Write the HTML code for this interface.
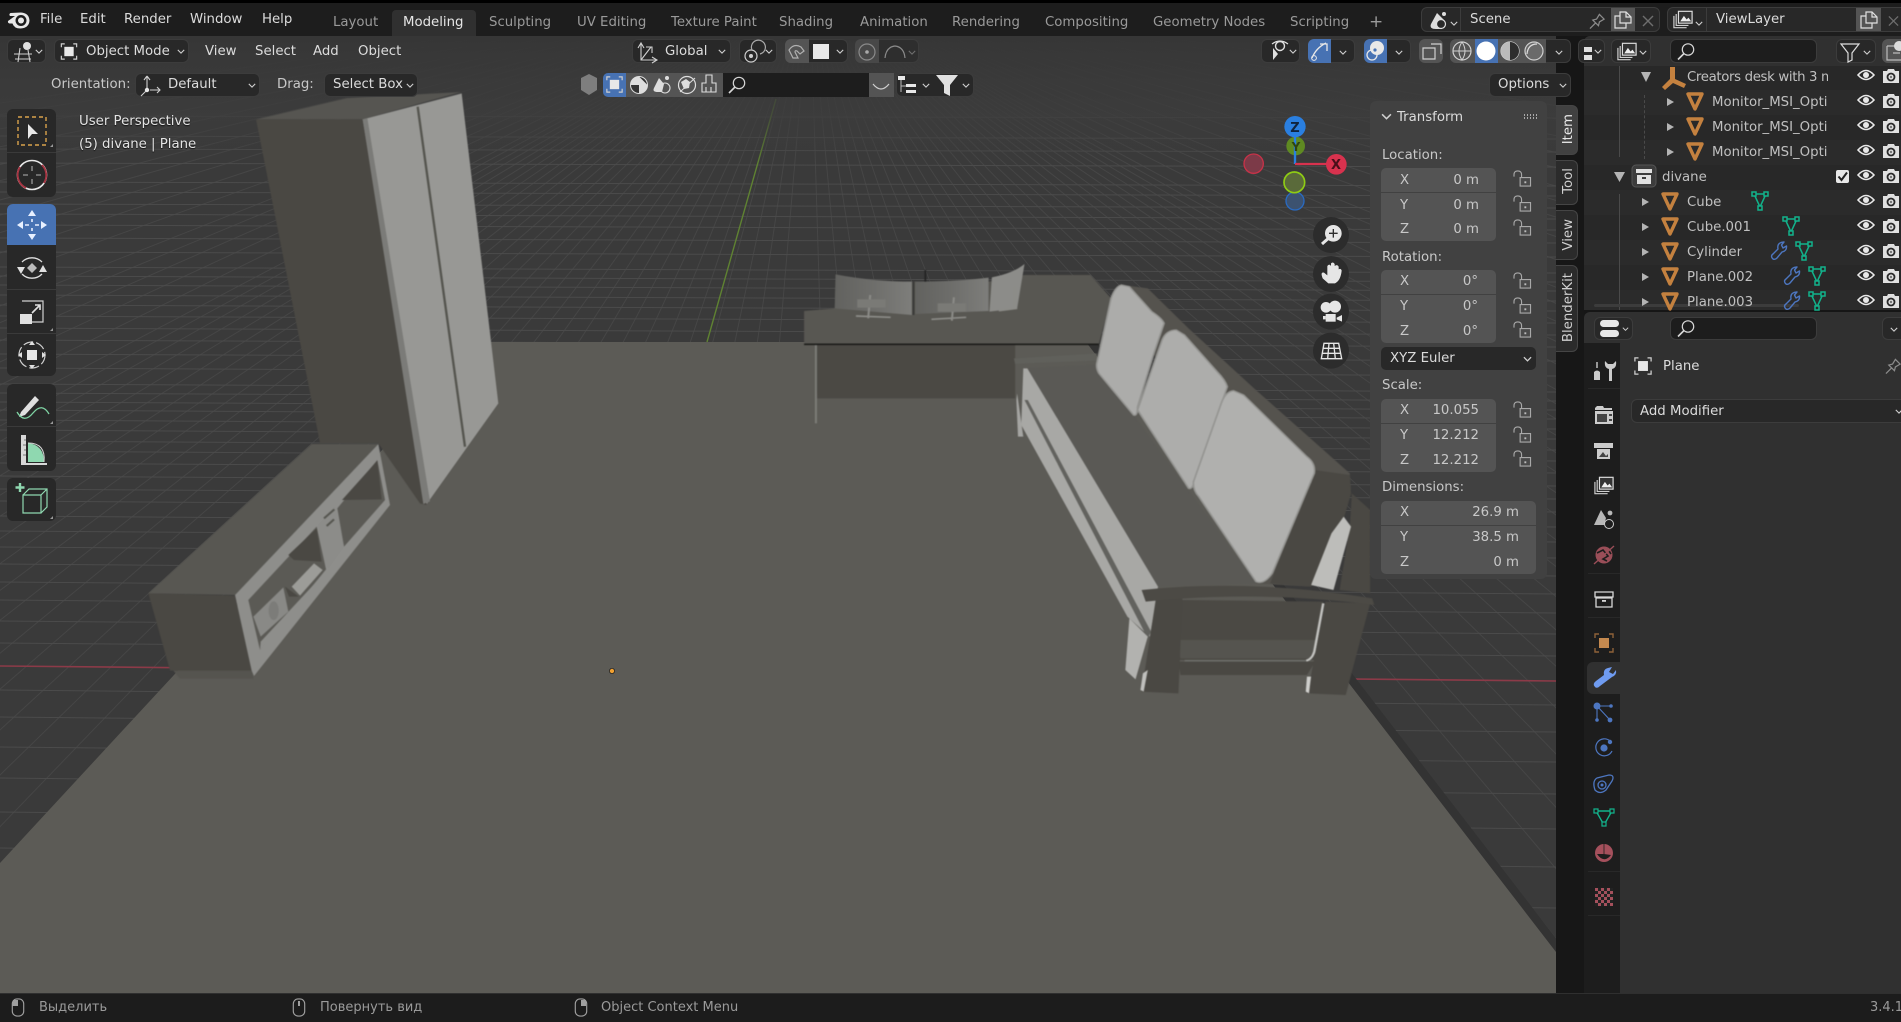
<!DOCTYPE html>
<html lang="en"><head><meta charset="utf-8"><title>Blender 3.4.1</title>
<style>
html,body{margin:0;padding:0;background:#000;}
#r{position:relative;width:1901px;height:1022px;overflow:hidden;background:#161616;font:13.3px/16px "DejaVu Sans","Liberation Sans",sans-serif;color:#c8c8c8;}
#r>svg{position:absolute;left:0;top:0;}
.b{position:absolute;box-sizing:border-box;}
.t{position:absolute;white-space:nowrap;height:16px;line-height:16px;transform:translateY(1.2px);}
.dk{background:#282828;border:1px solid #3c3c3c;border-radius:6px;}
.g{background:#545454;}
.bl{background:#4772b3;}
.mt{color:#dcdcdc;}
.tb{color:#9a9a9a;}
.vw{color:#e4e4e4;text-shadow:0 1px 1px #111;}
.f{position:absolute;background:#545454;height:24px;}
.ll{color:#c8c8c8;}
.vt{position:absolute;writing-mode:vertical-rl;transform:rotate(180deg);white-space:nowrap;line-height:16px;color:#cfcfcf;}
.tab{position:absolute;left:1556px;width:22px;background:#2b2b2b;border:1px solid #454545;border-left:0;border-radius:0 6px 6px 0;box-sizing:border-box;}
.ot{position:absolute;white-space:nowrap;overflow:hidden;height:16px;line-height:16px;color:#c0c0c0;transform:translateY(1px);}
.st{color:#9a9a9a;font-size:13px;}
</style></head><body><div id="r">

<svg width="1901" height="1022" viewBox="0 0 1901 1022">
<defs>
<linearGradient id="tp" x1="0" y1="0" x2="0" y2="1"><stop offset="0" stop-color="#363636"/><stop offset=".6" stop-color="#3c3c3c" stop-opacity=".75"/><stop offset="1" stop-color="#3c3c3c" stop-opacity="0"/></linearGradient>
<linearGradient id="mon" x1="0" y1="0" x2="1" y2="0"><stop offset="0" stop-color="#62625f"/><stop offset=".5" stop-color="#6e6e6b"/><stop offset="1" stop-color="#7e7e7b"/></linearGradient>
<clipPath id="vp"><rect x="0" y="36" width="1556" height="957"/></clipPath>
</defs>
<rect x="0" y="36" width="1556" height="957" fill="#3a3a3a"/>
<g clip-path="url(#vp)">
<path stroke="#464646" stroke-width="1" fill="none" d="M810-14L723 1000M810-14L660 1000M810-14L596 1000M810-14L533 1000M810-14L469 1000M810-14L405 1000M810-14L342 1000M810-14L278 1000M810-14L215 1000M810-14L151 1000M810-14L87 1000M810-14L24 1000M810-14L-40 1000M810-14L-103 1000M810-14L-167 1000M810-14L-231 1000M810-14L-294 1000M810-14L-358 1000M810-14L-421 1000M810-14L-485 1000M810-14L-549 1000M810-14L-612 1000M810-14L-676 1000M810-14L-739 1000M810-14L-803 1000M810-14L-867 1000M810-14L-930 1000M810-14L-994 1000M810-14L-1057 1000M810-14L-1121 1000M810-14L-1248 1000M810-14L-1375 1000M810-14L-1503 1000M810-14L-1630 1000M810-14L-1757 1000M810-14L-2011 1000M810-14L-2266 1000M810-14L-2520 1000M810-14L-2775 1000M810-14L-3029 1000M810-14L-3411 1000M810-14L-3792 1000M810-14L-4301 1000M810-14L-4937 1000M810-14L-5573 1000M810-14L-6209 1000
M810-14L841 1000M810-14L904 1000M810-14L968 1000M810-14L1031 1000M810-14L1095 1000M810-14L1159 1000M810-14L1222 1000M810-14L1286 1000M810-14L1349 1000M810-14L1413 1000M810-14L1477 1000M810-14L1540 1000M810-14L1604 1000M810-14L1667 1000M810-14L1731 1000M810-14L1795 1000M810-14L1858 1000M810-14L1922 1000M810-14L1985 1000M810-14L2049 1000M810-14L2113 1000M810-14L2176 1000M810-14L2240 1000M810-14L2303 1000M810-14L2367 1000M810-14L2431 1000M810-14L2494 1000M810-14L2558 1000M810-14L2621 1000M810-14L2685 1000M810-14L2812 1000M810-14L2939 1000M810-14L3067 1000M810-14L3194 1000M810-14L3321 1000M810-14L3575 1000M810-14L3830 1000M810-14L4084 1000M810-14L4339 1000M810-14L4593 1000M810-14L4975 1000M810-14L5356 1000M810-14L5865 1000M810-14L6501 1000M810-14L7137 1000M810-14L7773 1000"/>
<path stroke="#4b4b4b" stroke-width="1" fill="none" d="M0 984L1556 1004M0 934L1556 954M0 889L1556 908M0 848L1556 867M0 812L1556 829M0 778L1556 794M0 747L1556 762M0 717L1556 732M0 690L1556 705M0 643L1556 656M0 621L1556 634M0 600L1556 613M0 582L1556 594M0 564L1556 576M0 547L1556 558M0 531L1556 542M0 516L1556 527M0 501L1556 512M0 489L1556 499M0 476L1556 486M0 463L1556 473M0 451L1556 461M0 441L1556 450M0 430L1556 439M0 420L1556 429M0 410L1556 419M0 402L1556 410M0 393L1556 401M0 384L1556 392M0 368L1556 376M0 354L1556 361M0 340L1556 347M0 328L1556 335M0 316L1556 323M0 305L1556 311M0 295L1556 301M0 285L1556 291M0 276L1556 282M0 267L1556 273M0 252L1556 257M0 238L1556 243M0 225L1556 230M0 214L1556 219M0 204L1556 208M0 192L1556 196M0 182L1556 186M0 163L1556 167M0 149L1556 152M0 136L1556 139M0 116L1556 118"/>
<path d="M0 666L1556 681" stroke="#8c3a48" stroke-width="1.6"/>
<path d="M707 342L776 99" stroke="#5f8232" stroke-width="1.4"/>
<rect x="0" y="36" width="1556" height="130" fill="url(#tp)"/>
<path d="M1086 342L1562 960" stroke="#333" stroke-width="9" transform="translate(5 0)"/>
<!-- floor -->
<polygon points="482,342 1086,342 1556,952 1556,993 0,993 0,863" fill="#5c5b56"/>
<g style="filter:blur(.5px)">
<!-- wardrobe -->
<g transform="translate(0 100) scale(.33333)">
<polygon points="768,58 1041,-6 1383,-24 1088,58" fill="#565551"/>
<polygon points="768,58 1088,58 1280,1215 1260,1210 1135,1030 960,1030" fill="#4a4843"/>
<polygon points="1088,58 1385,-20 1495,910 1280,1212" fill="#989895"/>
<polygon points="1088,58 1102,54 1290,1204 1270,1212" fill="#7b7b78"/>
<path d="M1253 20L1395 1040" stroke="#55554f" stroke-width="7"/>
</g>
<!-- TV stand -->
<g transform="translate(140 430) scale(.33333)">
<polygon points="100,722 335,722 340,746 120,746" fill="#55544f"/>
<polygon points="25,490 285,497 335,722 90,722" fill="#4a4843"/>
<polygon points="25,490 515,42 715,42 285,495" fill="#585752"/>
<polygon points="285,495 715,42 750,225 342,738 335,722" fill="#8e8e8b"/>
<polygon points="592,235 712,90 735,210 612,350" fill="#5b5a55"/>
<polygon points="606,210 712,92 725,208" fill="#4a4843"/>
<polygon points="535,285 585,230 612,350 565,415 555,395" fill="#8c8c89"/>
<path d="M552 265L583 238M560 288L582 268" stroke="#55554f" stroke-width="6"/>
<polygon points="325,510 530,290 558,418 360,660" fill="#5b5a55"/>
<polygon points="445,375 530,295 545,395 462,390" fill="#4a4843"/>
<polygon points="340,560 430,472 445,545 362,620" fill="#898986"/>
<ellipse cx="401" cy="542" rx="15" ry="28" fill="#7c7c79"/>
<polygon points="435,470 476,500 447,500" fill="#4a4843"/>
<polygon points="455,470 522,400 548,420 480,497" fill="#9c9c98"/>
<polygon points="362,635 560,422 565,440 360,660" fill="#8e8e8b"/>
</g>
<!-- desk + monitors + sofa -->
<g transform="translate(760 240) scale(.40816 .33333)">
<polygon points="135,315 625,315 625,475 140,475" fill="#4b4944"/>
<path d="M137 315V550" stroke="#7c7c78" stroke-width="5"/>
<polygon points="108,213 183,205 185,125 560,125 648,105 810,105 860,175 830,312 108,312" fill="#585752"/>
<path d="M108 313H830" stroke="#1d1d1b" stroke-width="5"/>
<path d="M185 103Q280 125 372 125V225L183 205Z" fill="url(#mon)"/>
<path d="M380 125Q480 125 560 113V213L380 222Z" fill="url(#mon)"/>
<path d="M568 112Q620 100 648 72L630 205L562 215Z" fill="#8c8c89"/>
<path d="M376 125V225" stroke="#3a3a38" stroke-width="5"/><path d="M405 90V125" stroke="#222" stroke-width="4"/>
<path d="M270 165L265 235M235 228L320 232M475 172L470 242M420 238L505 232M625 140L625 205M585 212L630 205" stroke="#8c8c88" stroke-width="5" fill="none"/>
<rect x="238" y="178" width="70" height="25" fill="#7a7a76"/><rect x="435" y="190" width="70" height="25" fill="#7a7a76"/>
<!-- sofa -->
<polygon points="622,355 825,340 825,362 690,368 625,372" fill="#60605b"/>
<polygon points="890,135 950,145 1050,265 1215,450 1445,700 1448,760 1400,960 1350,1040 1215,1030" fill="#55534e"/>
<polygon points="1358,690 1445,705 1448,760 1400,960 1350,1040 1250,1030" fill="#4a4843"/>
<polygon points="1450,760 1495,810 1495,1060 1420,1050 1445,860" fill="#4a4843"/>
<polygon points="1350,1035 1400,880 1430,830 1448,860 1405,1050" fill="#bdbdba"/>
<polygon points="655,385 825,375 1215,1030 975,1040" fill="#5a5955"/>
<polygon points="645,385 655,385 975,1040 965,1120 955,1190 900,1130 640,555" fill="#a8a8a5"/>
<polygon points="648,480 656,480 958,1175 950,1195" fill="#62625e"/>
<polygon points="630,460 645,590 632,590 628,480" fill="#a5a5a2"/>
<g stroke="#949491" stroke-width="4">
<path d="M885 135Q870 140 860 175L825 370Q823 385 830 400L915 525Q925 530 925 500L965 340L990 250Q985 235 960 215L905 140Z" fill="#acacaa"/>
<path d="M1020 270Q995 270 985 300L925 510L1050 745Q1060 750 1065 720L1145 440Q1140 420 1120 395L1040 285Z" fill="#adadab"/>
<path d="M1160 452Q1140 455 1130 490L1062 725Q1060 750 1075 770L1215 1025Q1235 1035 1255 1000L1358 700Q1362 670 1340 650L1185 465Z" fill="#b0b0ae"/>
</g>
<polygon points="905,1135 950,1190 920,1318 895,1290" fill="#b2b2af"/>
<polygon points="1030,1080 1380,1085 1360,1260 1025,1260" fill="#4b4944"/>
<polygon points="1022,1200 1370,1200 1345,1255 1030,1255" fill="#55544f"/>
<path d="M1380 1090L1358 1235Q1352 1258 1338 1262" stroke="#c4c4c1" stroke-width="6" fill="none"/>
<path d="M1338 1262H1040" stroke="#6d6d69" stroke-width="5" fill="none"/>
<polygon points="1025,1265 1360,1265 1340,1305 1030,1305" fill="#4a4843"/>
<polygon points="970,1075 1035,1070 1025,1360 935,1355" fill="#4a4843"/>
<polygon points="1385,1085 1495,1090 1435,1365 1340,1360 1350,1305" fill="#4a4843"/>
<polygon points="1340,1310 1350,1310 1345,1360 1337,1355" fill="#cfcfcc"/>
<polygon points="950,1290 940,1355 932,1350 938,1300" fill="#c0c0bd"/>
<path d="M935 1050Q1200 1015 1500 1075L1505 1095Q1220 1050 945 1085Z" fill="#4c4a45"/>
</g>
</g>
<circle cx="612" cy="671" r="2.6" fill="#f0a030" stroke="#222" stroke-width=".8"/>
<!-- gizmo -->
<g transform="translate(1180 90) scale(.33333)">
<circle cx="221" cy="221" r="29" fill="#7c3a48" stroke="#c83248" stroke-width="4"/>
<circle cx="345" cy="333" r="27" fill="#3c5270" stroke="#2a6ac0" stroke-width="4"/>
<circle cx="343" cy="277" r="31" fill="#5a6a3a" stroke="#8fcc14" stroke-width="5"/>
<circle cx="347" cy="168" r="28" fill="#5f8a22"/>
<path d="M345 222V110" stroke="#2a7fe0" stroke-width="7"/><path d="M345 222H469" stroke="#d8324e" stroke-width="7"/>
<circle cx="345" cy="110" r="32" fill="#2a7fe0"/>
<circle cx="469" cy="223" r="31" fill="#d8324e"/>
<circle cx="453" cy="435" r="54" fill="#2c2c2c"/><circle cx="453" cy="552" r="54" fill="#2c2c2c"/><circle cx="453" cy="665" r="54" fill="#2c2c2c"/><circle cx="453" cy="782" r="54" fill="#2c2c2c"/>
<circle cx="460" cy="430" r="25" fill="#e6e6e6"/><path d="M445 445L426 462" stroke="#e6e6e6" stroke-width="9"/><path d="M447 430H473M460 417V443" stroke="#2c2c2c" stroke-width="4"/>
<path d="M428 565Q420 545 432 548L442 556V528Q448 520 453 528V520Q459 514 464 522V528Q472 522 476 530V538Q483 534 485 542Q482 572 465 580H445Z" fill="#e6e6e6"/>
<circle cx="438" cy="652" r="16" fill="#e6e6e6"/><circle cx="465" cy="650" r="18" fill="#e6e6e6"/><rect x="437" y="672" width="30" height="23" fill="#e6e6e6"/><path d="M429 678H437V688H429ZM470 683L486 675V695L470 688Z" fill="#e6e6e6"/>
<path d="M432 760H476L485 806H424ZM447 760L443 806M461 760L466 806M429 775H480M426 790H483" fill="none" stroke="#e6e6e6" stroke-width="4"/>
</g>
</g>
</svg>

<!-- top bars -->
<div class="b" style="left:0;top:0;width:1901px;height:3px;background:#000"></div>
<div class="b" style="left:0;top:3px;width:1901px;height:33px;background:#1d1d1d"></div>
<div class="b" style="left:392px;top:10px;width:84px;height:26px;background:#303030;border-radius:4px 4px 0 0"></div>
<div class="b dk" style="left:1421px;top:7px;width:239px;height:25px"></div>
<div class="b" style="left:1460px;top:8px;width:1px;height:23px;background:#3c3c3c"></div>
<div class="b g" style="left:1611px;top:8px;width:24px;height:23px"></div>
<div class="b dk" style="left:1667px;top:7px;width:240px;height:25px"></div>
<div class="b" style="left:1706px;top:8px;width:1px;height:23px;background:#3c3c3c"></div>
<div class="b g" style="left:1856px;top:8px;width:25px;height:23px"></div>

<!-- viewport header boxes -->
<div class="b dk" style="left:7px;top:39px;width:39px;height:24px"></div>
<div class="b dk" style="left:54px;top:39px;width:135px;height:24px"></div>
<div class="b dk" style="left:632px;top:39px;width:99px;height:24px"></div>
<div class="b dk" style="left:739px;top:39px;width:38px;height:24px"></div>
<div class="b dk" style="left:785px;top:39px;width:63px;height:24px"></div>
<div class="b g" style="left:785px;top:39px;width:24px;height:24px;border-radius:6px 0 0 6px"></div>
<div class="b dk" style="left:855px;top:39px;width:64px;height:24px;background:#2e2e2e"></div>
<div class="b" style="left:855px;top:39px;width:24px;height:24px;background:#484848;border-radius:6px 0 0 6px"></div>
<div class="b dk" style="left:1261px;top:39px;width:39px;height:24px"></div>
<div class="b dk" style="left:1308px;top:39px;width:47px;height:24px"></div>
<div class="b bl" style="left:1308px;top:39px;width:23px;height:24px;border-radius:6px 0 0 6px"></div>
<div class="b dk" style="left:1364px;top:39px;width:47px;height:24px"></div>
<div class="b bl" style="left:1364px;top:39px;width:23px;height:24px;border-radius:6px 0 0 6px"></div>
<div class="b g" style="left:1419px;top:39px;width:24px;height:24px;border-radius:6px"></div>
<div class="b dk" style="left:1450px;top:39px;width:121px;height:24px"></div>
<div class="b g" style="left:1450px;top:39px;width:25px;height:24px;border-radius:6px 0 0 6px"></div>
<div class="b bl" style="left:1475px;top:39px;width:23px;height:24px"></div>
<div class="b g" style="left:1498px;top:39px;width:48px;height:24px"></div>

<!-- tool settings -->
<div class="b dk" style="left:135px;top:73px;width:125px;height:24px"></div>
<div class="b dk" style="left:324px;top:73px;width:94px;height:24px"></div>
<div class="b bl" style="left:603px;top:73px;width:23px;height:24px;border-radius:5px 0 0 5px"></div>
<div class="b g" style="left:626px;top:73px;width:97px;height:24px"></div>
<div class="b" style="left:723px;top:73px;width:146px;height:24px;background:#1d1d1d"></div>
<div class="b g" style="left:869px;top:73px;width:25px;height:24px"></div>
<div class="b dk" style="left:896px;top:73px;width:78px;height:24px"></div>
<div class="b dk" style="left:1489px;top:73px;width:82px;height:24px"></div>

<!-- toolbar -->
<div class="b" style="left:7px;top:109px;width:49px;height:88px;background:#282828;border-radius:6px"></div>
<div class="b" style="left:7px;top:152px;width:49px;height:1px;background:#3a3a3a"></div>
<div class="b" style="left:7px;top:204px;width:49px;height:172px;background:#282828;border-radius:6px"></div>
<div class="b bl" style="left:7px;top:204px;width:49px;height:41px;border-radius:6px 6px 0 0"></div>
<div class="b" style="left:7px;top:289px;width:49px;height:1px;background:#3a3a3a"></div>
<div class="b" style="left:7px;top:333px;width:49px;height:1px;background:#3a3a3a"></div>
<div class="b" style="left:7px;top:384px;width:49px;height:87px;background:#282828;border-radius:6px"></div>
<div class="b" style="left:7px;top:426px;width:49px;height:1px;background:#3a3a3a"></div>
<div class="b" style="left:7px;top:478px;width:49px;height:43px;background:#282828;border-radius:6px"></div>

<!-- N panel -->
<div class="b" style="left:1556px;top:100px;width:28px;height:893px;background:#171717"></div>
<div class="b" style="left:1370px;top:101px;width:177px;height:478px;background:#414141;border-radius:6px"></div>
<div class="tab" style="top:105px;height:50px;background:#414141"></div>
<div class="tab" style="top:160px;height:45px"></div>
<div class="tab" style="top:210px;height:50px"></div>
<div class="tab" style="top:265px;height:87px"></div>

<div class="f" style="left:1381px;top:168px;width:115px;border-radius:5px 5px 0 0"></div>
<div class="f" style="left:1381px;top:192.5px;width:115px"></div>
<div class="f" style="left:1381px;top:217px;width:115px;border-radius:0 0 5px 5px"></div>
<div class="f" style="left:1381px;top:270px;width:115px;border-radius:5px 5px 0 0"></div>
<div class="f" style="left:1381px;top:294.5px;width:115px"></div>
<div class="f" style="left:1381px;top:319px;width:115px;border-radius:0 0 5px 5px"></div>
<div class="b" style="left:1381px;top:347px;width:155px;height:23px;background:#282828;border-radius:5px"></div>
<div class="f" style="left:1381px;top:399px;width:115px;border-radius:5px 5px 0 0"></div>
<div class="f" style="left:1381px;top:423.5px;width:115px"></div>
<div class="f" style="left:1381px;top:448px;width:115px;border-radius:0 0 5px 5px"></div>
<div class="f" style="left:1381px;top:501px;width:155px;border-radius:5px 5px 0 0"></div>
<div class="f" style="left:1381px;top:525.5px;width:155px"></div>
<div class="f" style="left:1381px;top:550px;width:155px;border-radius:0 0 5px 5px"></div>

<!-- outliner -->
<div class="b" style="left:1584px;top:36px;width:317px;height:274px;background:#282828;border-radius:6px 0 0 6px"></div>
<div class="b" style="left:1584px;top:36px;width:317px;height:30px;background:#303030;border-radius:6px 0 0 0"></div>
<div class="b" style="left:1584px;top:90px;width:317px;height:25px;background:#2b2b2b"></div>
<div class="b" style="left:1584px;top:140px;width:317px;height:25px;background:#2b2b2b"></div>
<div class="b" style="left:1584px;top:190px;width:317px;height:25px;background:#2b2b2b"></div>
<div class="b" style="left:1584px;top:240px;width:317px;height:25px;background:#2b2b2b"></div>
<div class="b" style="left:1584px;top:290px;width:317px;height:20px;background:#2b2b2b"></div>
<div class="b dk" style="left:1578px;top:39px;width:27px;height:24px;background:#282828"></div>
<div class="b dk" style="left:1611px;top:39px;width:40px;height:24px"></div>
<div class="b" style="left:1670px;top:39px;width:147px;height:24px;background:#1d1d1d;border:1px solid #3c3c3c;border-radius:6px"></div>
<div class="b dk" style="left:1836px;top:39px;width:40px;height:24px"></div>
<div class="b g" style="left:1882px;top:39px;width:25px;height:24px;border-radius:6px"></div>
<div class="b" style="left:1619px;top:66px;width:1px;height:91px;background:#4a4a4a"></div>
<div class="b" style="left:1619px;top:194px;width:1px;height:116px;background:#4a4a4a"></div>
<div class="b" style="left:1644px;top:95px;width:0;height:64px;border-left:1px dashed #4a4a4a"></div>
<div class="b" style="left:1594px;top:304px;width:205px;height:3px;background:#3c3c3c;border-radius:2px"></div>

<!-- properties -->
<div class="b" style="left:1584px;top:312px;width:317px;height:31px;background:#303030;border-radius:6px 0 0 0"></div>
<div class="b" style="left:1584px;top:343px;width:36px;height:650px;background:#1d1d1d"></div>
<div class="b" style="left:1620px;top:343px;width:281px;height:650px;background:#303030"></div>
<div class="b dk" style="left:1594px;top:317px;width:39px;height:23px"></div>
<div class="b" style="left:1670px;top:317px;width:147px;height:23px;background:#1d1d1d;border:1px solid #3c3c3c;border-radius:6px"></div>
<div class="b dk" style="left:1882px;top:317px;width:25px;height:23px"></div>
<div class="b" style="left:1587px;top:662px;width:33px;height:32px;background:#303030;border-radius:6px 0 0 6px"></div>
<div class="b dk" style="left:1631px;top:399px;width:276px;height:24px"></div>
<div class="b" style="left:1588px;top:388px;width:32px;height:1px;background:#282828"></div>
<div class="b" style="left:1588px;top:573px;width:32px;height:1px;background:#282828"></div>
<div class="b" style="left:1588px;top:617px;width:32px;height:1px;background:#282828"></div>
<div class="b" style="left:1588px;top:871px;width:32px;height:1px;background:#282828"></div>
<div class="b" style="left:1588px;top:915px;width:32px;height:1px;background:#282828"></div>

<!-- status -->
<div class="b" style="left:0;top:993px;width:1901px;height:29px;background:#1c1c1c;border-top:1px solid #2f2f2f"></div>

<!-- ICONS -->
<svg width="1901" height="1022" viewBox="0 0 1901 1022" fill="none">
<defs>
<symbol id="tri" viewBox="0 0 18 20" overflow="visible"><path d="M2 2H16L9 17Z" stroke="#c4813f" stroke-width="3.4" stroke-linejoin="round"/></symbol>
<symbol id="msh" viewBox="0 0 18 20" overflow="visible"><path d="M3 3H15L9 16Z" stroke="#12b38c" stroke-width="1.5"/><path d="M1 1h4v4H1zM13 1h4v4h-4zM7 15h4v4H7z" stroke="#12b38c" stroke-width="1.5" fill="#282828"/></symbol>
<symbol id="wr" viewBox="0 0 18 20" overflow="visible"><path d="M3 18Q0 15 3 13L8 8Q7 3 11 1.5L14 1L11.5 4L13 7L16.5 5Q17 10 12 11L7 17Q5 19 3 18Z" stroke="#4d76c0" stroke-width="1.4" stroke-linejoin="round"/></symbol>
<symbol id="eye" viewBox="0 0 18 14" overflow="visible"><path d="M1 7Q9-2 17 7Q9 16 1 7Z" stroke="#e8e8e8" stroke-width="1.6"/><circle cx="9" cy="7" r="3" fill="#e8e8e8"/></symbol>
<symbol id="cam" viewBox="0 0 18 16" overflow="visible"><path d="M1 3H5L6 1H12L13 3H17V15H1Z" fill="#e0e0e0"/><circle cx="9" cy="9" r="4.4" fill="#282828"/><circle cx="9" cy="9" r="2.6" fill="#e0e0e0"/><circle cx="9" cy="9" r="1.2" fill="#777"/></symbol>
<symbol id="lk" viewBox="0 0 20 18" overflow="visible"><rect x="7.5" y="8" width="11" height="9" stroke="#a8a8a8" stroke-width="1.2" fill="#4a4a4a"/><path d="M1 7V5Q1 1 5 1T9 5V8" stroke="#a8a8a8" stroke-width="1.2"/><rect x="12" y="12" width="2" height="2" fill="#bbb"/></symbol>
<symbol id="ch" viewBox="0 0 10 6" overflow="visible"><path d="M1 1L5 5L9 1" stroke="#d0d0d0" stroke-width="1.4"/></symbol>
<symbol id="ar" viewBox="0 0 8 10" overflow="visible"><path d="M1 1L8 5L1 9Z" fill="#b4b4b4"/></symbol>
<symbol id="obj" viewBox="0 0 20 20" overflow="visible"><rect x="4.5" y="4.5" width="11" height="11" fill="#e8e8e8"/><path d="M1 5V1H5M15 1H19V5M19 15V19H15M5 19H1V15" stroke="#cfcfcf" stroke-width="1.4"/></symbol>
<symbol id="lay" viewBox="0 0 22 20" overflow="visible"><path d="M1 6V19H15M3.5 4V16.5H17" stroke="#cfcfcf" stroke-width="1.3"/><rect x="6" y="1" width="15" height="13" fill="#333" stroke="#ddd" stroke-width="1.3"/><path d="M8 12L12 6L15 10L17 8L20 12Z" fill="#eee"/></symbol>
<symbol id="srch" viewBox="0 0 18 18" overflow="visible"><circle cx="11" cy="7" r="5.7" stroke="#d8d8d8" stroke-width="1.2"/><path d="M7 11L1 17" stroke="#d8d8d8" stroke-width="1.6"/></symbol>
<symbol id="cpy" viewBox="0 0 18 18" overflow="visible"><path d="M6 5H1V17H12V12" stroke="#e0e0e0" stroke-width="1.2"/><path d="M6 1H12L17 6V12H6Z" stroke="#e0e0e0" stroke-width="1.2"/><path d="M12 1V6H17" stroke="#e0e0e0" stroke-width="1.2"/></symbol>
<symbol id="pin" viewBox="0 0 18 18" overflow="visible"><path d="M1 17L7 11M4 8L10 14L11 10L16 7L11 2L8 7Z" stroke="#8c8c8c" stroke-width="1.3"/></symbol>
<symbol id="xx" viewBox="0 0 12 12" overflow="visible"><path d="M1 1L11 11M11 1L1 11" stroke="#6e6e6e" stroke-width="1.4"/></symbol>
<symbol id="ms" viewBox="0 0 14 20" overflow="visible"><rect x="1" y="1" width="12" height="18" rx="5" stroke="#a0a0a0" stroke-width="1.2"/></symbol>
</defs>

<!-- blender logo -->
<path d="M8 21L15 16H10Q8.500 14 10.500 13L21 12.500Q29 13 29.500 20.500Q29 28 20.500 28.500Q14 28.500 12.500 23.500L9.500 23.500Q7.500 23 8 21Z" fill="#e8e8e8"/><circle cx="21" cy="20.500" r="5.500" fill="#1d1d1d"/><circle cx="21" cy="20.500" r="3" fill="#e8e8e8"/>
<!-- scene / viewlayer -->
<path d="M1437 13L1431 24Q1429 29 1436 29H1442L1444 20Z" fill="#ddd"/><circle cx="1441" cy="24" r="4.5" fill="#282828" stroke="#ddd" stroke-width="1.2"/><circle cx="1444" cy="14" r="2" fill="#ddd"/>
<use href="#ch" x="1450" y="21" width="8" height="5"/>
<use href="#pin" x="1589" y="12" width="17" height="18"/><use href="#cpy" x="1614" y="11" width="18" height="18"/><use href="#xx" x="1642" y="15" width="12" height="12"/>
<use href="#lay" x="1673" y="10" width="20" height="19"/><use href="#ch" x="1695" y="21" width="8" height="5"/>
<use href="#cpy" x="1860" y="11" width="18" height="18"/><use href="#xx" x="1888" y="15" width="11" height="12"/>
<!-- editor type -->
<circle cx="27" cy="46" r="4" fill="#e0e0e0"/><path d="M14 54H32M15 59H31M20 48L18 62M28 50L30 62" stroke="#cfcfcf" stroke-width="1.1"/><use href="#ch" x="35" y="49" width="8" height="5"/>
<use href="#obj" x="60" y="43" width="18" height="17"/><use href="#ch" x="177" y="49" width="8" height="5"/>
<!-- orientation global -->
<path d="M641 44V60H656M641 60L651 47M638 48L641 43L644 48M652 57L657 60L652 63M646 47H652V53" stroke="#cfcfcf" stroke-width="1.100"/><use href="#ch" x="718" y="49" width="8" height="5"/>
<circle cx="751" cy="56" r="6" stroke="#d0d0d0" stroke-width="1.2"/><circle cx="751" cy="56" r="2" fill="#d0d0d0"/><path d="M752 50A7 7 0 1 1 760 54" stroke="#aaa" stroke-width="1.2"/><use href="#ch" x="765" y="49" width="8" height="5"/>
<path d="M793 58L789 50Q794 43 801 47L804 51L800 54L797 51Q795 50 795 52L798 58Z" stroke="#b0b0b0" stroke-width="1.2"/>
<rect x="813" y="44" width="16" height="15" fill="#e8e8e8"/><use href="#ch" x="836" y="49" width="8" height="5"/>
<circle cx="867" cy="52" r="8" stroke="#8a8a8a" stroke-width="1.2"/><circle cx="867" cy="52" r="1.8" fill="#aaa"/><path d="M885 58Q886 47 895 46Q904 47 905 58" stroke="#8a8a8a" stroke-width="1.2"/><use href="#ch" x="908" y="50" width="8" height="5" opacity=".4"/>
<!-- right header -->
<circle cx="1280" cy="46" r="4.5" stroke="#e0e0e0" stroke-width="1.4"/><path d="M1272 44Q1280 38 1288 44" stroke="#e0e0e0" stroke-width="1.2"/><path d="M1273 48L1273 60L1278 54Z" fill="#e0e0e0"/><use href="#ch" x="1289" y="49" width="8" height="5"/>
<path d="M1312 58Q1316 48 1326 43M1320 44H1327V51" stroke="#e8e8e8" stroke-width="1.3"/><circle cx="1314" cy="58" r="2.4" stroke="#e8e8e8"/><use href="#ch" x="1339" y="50" width="8" height="5"/>
<circle cx="1377" cy="48" r="7" fill="#e8e8e8"/><circle cx="1372" cy="55" r="5" stroke="#e8e8e8" stroke-width="1.3"/><circle cx="1375" cy="50" r="1.6" fill="#4772b3"/><use href="#ch" x="1395" y="50" width="8" height="5"/>
<path d="M1431 44H1441V54M1423 48H1435V59H1423Z" stroke="#d0d0d0" stroke-width="1.2"/>
<circle cx="1462" cy="51" r="9" stroke="#d0d0d0" stroke-width="1.2"/><path d="M1453 51H1471M1462 42Q1456 51 1462 60Q1468 51 1462 42" stroke="#d0d0d0" stroke-width="1"/>
<circle cx="1486" cy="51" r="9.5" fill="#fff"/>
<circle cx="1510" cy="51" r="9" stroke="#d0d0d0" stroke-width="1.2"/><path d="M1510 42A9 9 0 0 1 1510 60Z" fill="#2d2d2d"/><path d="M1510 42A9 9 0 0 0 1510 60Z" fill="#bbb"/>
<circle cx="1534" cy="51" r="9" fill="#6a6a6a" stroke="#d0d0d0" stroke-width="1.2"/><path d="M1527 54Q1528 44 1537 44" stroke="#ddd" stroke-width="1.2"/>
<use href="#ch" x="1555" y="50" width="8" height="5"/>
<!-- tool settings icons -->
<path d="M147 76V89M147 76L144 80M147 76L150 80M150 90H160M157 87L160 90L157 93M141 96L147 90" stroke="#cfcfcf" stroke-width="1.1"/><circle cx="147" cy="90" r="2.2" fill="#e8e8e8"/>
<use href="#ch" x="248" y="83" width="8" height="5"/><use href="#ch" x="406" y="83" width="8" height="5"/>
<polygon points="589,74 597,78 597,90 589,95 581,90 581,78" fill="#7e7e7e"/>
<use href="#obj" x="606" y="76" width="17" height="17"/>
<circle cx="639" cy="85" r="8.5" fill="#333" stroke="#ddd"/><path d="M639 76.5A8.5 8.5 0 0 0 630.5 85H639V93.5A8.5 8.5 0 0 0 647.5 85" fill="#ddd"/>
<path d="M659 78L654 88Q652 92 658 92H662L664 84Z" fill="#ddd"/><circle cx="667" cy="78" r="2" fill="#ddd"/><circle cx="665" cy="88" r="5" stroke="#ddd" stroke-width="1.1"/>
<circle cx="687" cy="85" r="8.5" stroke="#ddd" stroke-width="1.2"/><path d="M681 82L686 79L690 82L689 88L684 89ZM691 87L693 83" fill="#ddd"/><path d="M680 92L695 78" stroke="#ddd"/>
<path d="M706 75H712V83H716V92H702V83H706ZM706 92V87M711 92V87" stroke="#ddd" stroke-width="1.1"/>
<use href="#srch" x="728" y="76" width="18" height="18"/>
<path d="M873 84Q881 94 889 84" stroke="#cfcfcf" stroke-width="1.2"/>
<rect x="898" y="76" width="7" height="4" fill="#e8e8e8"/><path d="M901 80V92M901 86H906" stroke="#bbb"/><rect x="906" y="84" width="10" height="3" fill="#e8e8e8"/><rect x="906" y="90" width="10" height="3" fill="#e8e8e8"/><use href="#ch" x="922" y="83" width="8" height="5"/>
<path d="M936 75H958L950 85V96L944 93V85Z" fill="#e0e0e0"/><use href="#ch" x="962" y="83" width="8" height="5"/>
<use href="#ch" x="1559" y="83" width="8" height="5"/>
<!-- toolbar icons -->
<rect x="18" y="117" width="28" height="28" stroke="#d9a24c" stroke-width="1.4" stroke-dasharray="4 3"/>
<path d="M28 124L28 139L32 134L38 134Z" fill="#e8e8e8"/>
<circle cx="32" cy="175" r="14.5" stroke="#e8e8e8" stroke-width="1.6"/><path d="M20 167A14.5 14.5 0 0 0 26 188M44 183A14.5 14.500 0 0 0 42 165" stroke="#a83442" stroke-width="1.8"/><path d="M32 166V171M32 179V184M23 175H28M36 175H41" stroke="#999" stroke-width="1.3"/>
<path d="M32 210L28 216H36ZM32 240L28 234H36ZM17 225L23 221V229ZM47 225L41 221V229Z" fill="#e8f0ff"/><path d="M32 219V222M32 228V231M25 225H29M35 225H39" stroke="#e8f0ff" stroke-width="1.6"/>
<path d="M22 262A14 14 0 0 1 42 262M42 274A14 14 0 0 1 22 274" stroke="#e0e0e0" stroke-width="1.3"/><path d="M32 263L37 268L32 273L27 268Z" fill="#bbb"/><path d="M17 267H25L21 274ZM39 272H47L43 265Z" fill="#e0e0e0"/>
<path d="M22 301H43V322H32" stroke="#d0d0d0" stroke-width="1.2"/><rect x="20" y="314" width="12" height="10" fill="#e0e0e0"/><path d="M32 313L40 305M35 305H40V310" stroke="#e0e0e0" stroke-width="1.6"/>
<circle cx="32" cy="355" r="13" stroke="#d0d0d0" stroke-width="1.2" stroke-dasharray="10 3"/><rect x="27" y="350" width="10" height="10" fill="#e8e8e8"/><path d="M32 341L29 345H35ZM32 369L29 365H35ZM18 355L22 352V358ZM46 355L42 352V358Z" fill="#e0e0e0"/>
<path d="M21 412L35 396L39 400L25 415L19 417Z" fill="#e0e0e0"/><path d="M17 412Q24 424 33 413T49 414" stroke="#7fd4a4" stroke-width="1.3"/>
<path d="M21 435H26V463H47V465H21Z" fill="#d8d8d8"/><path d="M28 462V443Q44 445 44 462Z" fill="#8fd8b0"/><path d="M28 443Q46 443 44 462" stroke="#d8d8d8"/><path d="M26 440H24M26 445H23M26 450H24M26 455H23" stroke="#777"/>
<path d="M23 495H41V513H23ZM23 495L29 489H47V507L41 513M41 495L47 489" stroke="#8fd8b0" stroke-width="1.2"/><path d="M20 483V492M15.500 487.500H24.500" stroke="#8fd8b0" stroke-width="2.400"/>
<path d="M50 147l3-3v3zM50 331l3-3v3zM50 424l3-3v3zM50 519l3-3v3z" fill="#999"/>
<!-- N panel -->
<use href="#ch" x="1381" y="113" width="11" height="7"/>
<path d="M1524 115h1M1527 115h1M1530 115h1M1533 115h1M1536 115h1M1524 118h1M1527 118h1M1530 118h1M1533 118h1M1536 118h1" stroke="#aaa" stroke-width="2"/>
<g transform="translate(0 -1)">
<use href="#lk" x="1513" y="171" width="19" height="17"/><use href="#lk" x="1513" y="196" width="19" height="17"/><use href="#lk" x="1513" y="220" width="19" height="17"/>
<use href="#lk" x="1513" y="273" width="19" height="17"/><use href="#lk" x="1513" y="298" width="19" height="17"/><use href="#lk" x="1513" y="322" width="19" height="17"/>
<use href="#lk" x="1513" y="402" width="19" height="17"/><use href="#lk" x="1513" y="427" width="19" height="17"/><use href="#lk" x="1513" y="451" width="19" height="17"/>
</g>
<use href="#ch" x="1523" y="356" width="9" height="6"/>
<!-- outliner header -->
<path d="M1584 47H1592V52H1584ZM1584 55H1592V60H1584Z" fill="#e0e0e0"/><use href="#ch" x="1594" y="49" width="8" height="5"/>
<use href="#lay" x="1617" y="42" width="20" height="19"/><use href="#ch" x="1639" y="50" width="8" height="5"/>
<use href="#srch" x="1677" y="42" width="18" height="19"/>
<path d="M1841 44H1859L1852 53V60L1848 62V53Z" stroke="#ddd" stroke-width="1.2"/><use href="#ch" x="1863" y="50" width="8" height="5"/>
<path d="M1887 46H1898M1887 46V60H1901M1893 53H1900" stroke="#bbb" stroke-width="1.2"/><circle cx="1899" cy="46" r="5" fill="#ddd"/>
<!-- outliner rows -->
<path d="M1641 72H1651L1646 82Z" fill="#b4b4b4"/>
<path d="M1670 67H1675V79L1686 84L1684 88L1673 83L1665 90L1662 87L1670 79Z" fill="#c4813f"/>
<use href="#ar" x="1666" y="97" width="8" height="10"/><use href="#ar" x="1666" y="122" width="8" height="10"/><use href="#ar" x="1666" y="147" width="8" height="10"/>
<use href="#tri" x="1686" y="92" width="18" height="20"/><use href="#tri" x="1686" y="117" width="18" height="20"/><use href="#tri" x="1686" y="142" width="18" height="20"/>
<path d="M1614 172H1625L1619.500 182Z" fill="#b4b4b4"/>
<rect x="1632" y="165" width="24" height="22" rx="4" fill="#3c3c3c" stroke="#555"/><path d="M1636 169H1652V173H1636ZM1637 175H1651V184H1637Z" fill="#e0e0e0"/><rect x="1642" y="177" width="4" height="2" fill="#3c3c3c"/>
<rect x="1836" y="170" width="13" height="13" rx="2" fill="#e8e8e8"/><path d="M1838.500 176.500L1841.500 180L1847 172.500" stroke="#222" stroke-width="2"/>
<use href="#ar" x="1641" y="197" width="8" height="10"/><use href="#ar" x="1641" y="222" width="8" height="10"/><use href="#ar" x="1641" y="247" width="8" height="10"/><use href="#ar" x="1641" y="272" width="8" height="10"/><use href="#ar" x="1641" y="297" width="8" height="10"/>
<use href="#tri" x="1661" y="192" width="18" height="20"/><use href="#tri" x="1661" y="217" width="18" height="20"/><use href="#tri" x="1661" y="242" width="18" height="20"/><use href="#tri" x="1661" y="267" width="18" height="20"/><use href="#tri" x="1661" y="292" width="18" height="20"/>
<use href="#msh" x="1751" y="191" width="18" height="20"/><use href="#msh" x="1782" y="216" width="18" height="20"/><use href="#wr" x="1770" y="241" width="18" height="20"/><use href="#msh" x="1795" y="241" width="18" height="20"/><use href="#wr" x="1783" y="266" width="18" height="20"/><use href="#msh" x="1808" y="266" width="18" height="20"/><use href="#wr" x="1783" y="291" width="18" height="20"/><use href="#msh" x="1808" y="291" width="18" height="20"/>
<use href="#eye" x="1857" y="68" width="18" height="14"/><use href="#eye" x="1857" y="93" width="18" height="14"/><use href="#eye" x="1857" y="118" width="18" height="14"/><use href="#eye" x="1857" y="143" width="18" height="14"/><use href="#eye" x="1857" y="168" width="18" height="14"/><use href="#eye" x="1857" y="193" width="18" height="14"/><use href="#eye" x="1857" y="218" width="18" height="14"/><use href="#eye" x="1857" y="243" width="18" height="14"/><use href="#eye" x="1857" y="268" width="18" height="14"/><use href="#eye" x="1857" y="293" width="18" height="14"/>
<use href="#cam" x="1882" y="68" width="18" height="16"/><use href="#cam" x="1882" y="93" width="18" height="16"/><use href="#cam" x="1882" y="118" width="18" height="16"/><use href="#cam" x="1882" y="143" width="18" height="16"/><use href="#cam" x="1882" y="168" width="18" height="16"/><use href="#cam" x="1882" y="193" width="18" height="16"/><use href="#cam" x="1882" y="218" width="18" height="16"/><use href="#cam" x="1882" y="243" width="18" height="16"/><use href="#cam" x="1882" y="268" width="18" height="16"/><use href="#cam" x="1882" y="293" width="18" height="16"/>
<!-- properties header -->
<rect x="1600" y="320" width="19" height="7" rx="3.500" fill="#e8e8e8"/><rect x="1600" y="330" width="19" height="7" rx="3.500" fill="#e8e8e8"/><use href="#ch" x="1622" y="327" width="7" height="4"/>
<use href="#srch" x="1677" y="319" width="18" height="19"/><use href="#ch" x="1890" y="327" width="8" height="5"/>
<use href="#obj" x="1634" y="357" width="18" height="18"/><use href="#pin" x="1885" y="357" width="17" height="18"/>
<use href="#ch" x="1895" y="409" width="8" height="5"/>
<!-- properties tabs -->
<path d="M1597 362V368" stroke="#ccc" stroke-width="1.400"/><path d="M1594 372Q1597 369 1600 372V380H1594Z" fill="#ccc"/><path d="M1605 361Q1604 368 1609 369V381H1612V369Q1617 368 1616 361L1613 364H1608Z" fill="#ccc"/>
<path d="M1597 406H1603L1604 408H1612V410H1595V408ZM1595 411H1613V424H1595Z" fill="#ccc"/><rect x="1597" y="414" width="10" height="8" fill="#444"/><rect x="1609" y="414" width="3" height="2" fill="#444"/><rect x="1609" y="419" width="3" height="2" fill="#444"/>
<path d="M1594 443H1613V448H1594ZM1597 449H1610V459H1597Z" fill="#ccc"/><path d="M1599 457L1603 452L1606 456L1608 454V457Z" fill="#444"/>
<use href="#lay" x="1594" y="476" width="20" height="19"/>
<path d="M1601 510L1594 525H1604L1606 518Z" fill="#b8b8b8"/><circle cx="1609" cy="524" r="4.500" stroke="#ccc"/><circle cx="1610" cy="513" r="2.400" fill="#b8b8b8"/>
<circle cx="1604" cy="555" r="8.500" fill="#9a4e58"/><path d="M1597 553L1603 550L1608 556L1603 559L1607 561M1609 551L1611 554" stroke="#1d1d1d" stroke-width="1.600"/><path d="M1594 564L1614 546" stroke="#9a4e58" stroke-width="1.400"/>
<path d="M1595 592H1613V597H1595ZM1596 598H1612V607H1596Z" stroke="#d8d8d8" stroke-width="1.300"/><rect x="1602" y="600" width="4" height="1.800" fill="#d8d8d8"/>
<rect x="1599" y="638" width="10" height="10" fill="#c4894f"/><path d="M1595 638V634H1599M1609 634H1613V638M1613 648V652H1609M1599 652H1595V648" stroke="#8f6238" stroke-width="1.400"/>
<path d="M1595 687Q1592 684 1596 681L1604 675Q1603 669 1608 668L1612 667L1609 672L1613 674L1616 670Q1617 675 1612 677L1600 686Q1597 689 1595 687Z" fill="#6f9bf0"/>
<circle cx="1597" cy="706" r="3.500" fill="#4d76c0"/><circle cx="1611" cy="706" r="1.800" fill="#4d76c0"/><circle cx="1597" cy="720" r="1.800" fill="#4d76c0"/><circle cx="1610" cy="720" r="2.400" fill="#4d76c0"/><path d="M1597 706H1611M1597 706V720M1597 706L1610 720" stroke="#4d76c0" stroke-width="1.100"/>
<circle cx="1604" cy="748" r="3.600" fill="#4d76c0"/><path d="M1610 741A8.500 8.500 0 1 0 1612 751" stroke="#4d76c0" stroke-width="1.200"/><circle cx="1610" cy="742" r="2.200" fill="#4d76c0"/>
<path d="M1595 790Q1592 781 1597 778L1609 775Q1615 775 1612 781L1606 790Q1600 795 1595 790Z" stroke="#4d76c0" stroke-width="1.300"/><circle cx="1602" cy="785" r="4" stroke="#4d76c0" stroke-width="1.300"/><circle cx="1602" cy="785" r="1.500" fill="#4d76c0"/>
<path d="M1596 811H1612L1604 825Z" stroke="#12b38c" stroke-width="1.400"/><path d="M1594 809h4v4h-4zM1610 809h4v4h-4zM1602 822h4v4h-4z" stroke="#12b38c" stroke-width="1.200" fill="#1d1d1d"/>
<circle cx="1604" cy="853" r="9" fill="#a5505c"/><path d="M1597 854Q1604 864 1611 855L1604 854Z" fill="#1d1d1d"/><path d="M1604 844V854" stroke="#1d1d1d" stroke-width=".8"/>
<rect x="1595" y="888" width="18" height="18" fill="#a5505c"/><path d="M1598 888h3v3h-3zM1604 888h3v3h-3zM1610 888h3v3h-3zM1595 891h3v3h-3zM1601 891h3v3h-3zM1607 891h3v3h-3zM1598 894h3v3h-3zM1604 894h3v3h-3zM1610 894h3v3h-3zM1595 897h3v3h-3zM1601 897h3v3h-3zM1607 897h3v3h-3zM1598 900h3v3h-3zM1604 900h3v3h-3zM1610 900h3v3h-3zM1595 903h3v3h-3zM1601 903h3v3h-3zM1607 903h3v3h-3z" fill="#222"/>
<!-- status icons -->
<use href="#ms" x="11" y="998" width="14" height="19"/><path d="M13 1000H18V1006H12Z" fill="#a0a0a0"/>
<use href="#ms" x="292" y="998" width="14" height="19"/><rect x="298" y="1001" width="2" height="5" fill="#a0a0a0"/>
<use href="#ms" x="574" y="998" width="14" height="19"/><path d="M581 1000H586V1006H581Z" fill="#a0a0a0"/>
<text x="1295" y="132" font-family="DejaVu Sans,sans-serif" font-weight="700" font-size="13" fill="#10243f" text-anchor="middle">Z</text>
<text x="1296" y="151" font-family="DejaVu Sans,sans-serif" font-weight="700" font-size="12" fill="#2f4410" text-anchor="middle">Y</text>
<text x="1336" y="169" font-family="DejaVu Sans,sans-serif" font-weight="700" font-size="13" fill="#4a0f1a" text-anchor="middle">X</text>
</svg>

<!-- TEXT -->
<span class="t mt" style="left:40px;top:11px">File</span><span class="t mt" style="left:80px;top:11px">Edit</span><span class="t mt" style="left:124px;top:11px">Render</span><span class="t mt" style="left:190px;top:11px">Window</span><span class="t mt" style="left:262px;top:11px">Help</span>
<span class="t tb" style="left:333px;top:14px">Layout</span><span class="t" style="left:403px;top:14px;color:#e6e6e6">Modeling</span><span class="t tb" style="left:489px;top:14px">Sculpting</span><span class="t tb" style="left:577px;top:14px">UV Editing</span><span class="t tb" style="left:671px;top:14px">Texture Paint</span><span class="t tb" style="left:779px;top:14px">Shading</span><span class="t tb" style="left:860px;top:14px">Animation</span><span class="t tb" style="left:952px;top:14px">Rendering</span><span class="t tb" style="left:1045px;top:14px">Compositing</span><span class="t tb" style="left:1153px;top:14px">Geometry Nodes</span><span class="t tb" style="left:1290px;top:14px">Scripting</span><span class="t tb" style="left:1369px;top:13px;font-size:17px">+</span>
<span class="t mt" style="left:1470px;top:11px">Scene</span><span class="t mt" style="left:1716px;top:11px">ViewLayer</span>

<span class="t mt" style="left:86px;top:43px">Object Mode</span><span class="t mt" style="left:205px;top:43px">View</span><span class="t mt" style="left:255px;top:43px">Select</span><span class="t mt" style="left:313px;top:43px">Add</span><span class="t mt" style="left:358px;top:43px">Object</span><span class="t mt" style="left:665px;top:43px">Global</span>
<span class="t ll" style="left:51px;top:76px">Orientation:</span><span class="t mt" style="left:168px;top:76px">Default</span><span class="t ll" style="left:277px;top:76px">Drag:</span><span class="t mt" style="left:333px;top:76px">Select Box</span><span class="t mt" style="left:1498px;top:76px">Options</span>
<span class="t vw" style="left:79px;top:113px">User Perspective</span><span class="t vw" style="left:79px;top:136px">(5) divane | Plane</span>

<span class="t mt" style="left:1397px;top:109px">Transform</span>
<span class="t ll" style="left:1382px;top:147px">Location:</span>
<span class="t ll" style="left:1400px;top:172px">X</span><span class="t ll" style="right:422px;top:172px">0 m</span>
<span class="t ll" style="left:1400px;top:197px">Y</span><span class="t ll" style="right:422px;top:197px">0 m</span>
<span class="t ll" style="left:1400px;top:221px">Z</span><span class="t ll" style="right:422px;top:221px">0 m</span>
<span class="t ll" style="left:1382px;top:249px">Rotation:</span>
<span class="t ll" style="left:1400px;top:273px">X</span><span class="t ll" style="right:423px;top:273px">0°</span>
<span class="t ll" style="left:1400px;top:298px">Y</span><span class="t ll" style="right:423px;top:298px">0°</span>
<span class="t ll" style="left:1400px;top:323px">Z</span><span class="t ll" style="right:423px;top:323px">0°</span>
<span class="t mt" style="left:1390px;top:350px">XYZ Euler</span>
<span class="t ll" style="left:1382px;top:377px">Scale:</span>
<span class="t ll" style="left:1400px;top:402px">X</span><span class="t ll" style="right:422px;top:402px">10.055</span>
<span class="t ll" style="left:1400px;top:427px">Y</span><span class="t ll" style="right:422px;top:427px">12.212</span>
<span class="t ll" style="left:1400px;top:452px">Z</span><span class="t ll" style="right:422px;top:452px">12.212</span>
<span class="t ll" style="left:1382px;top:479px">Dimensions:</span>
<span class="t ll" style="left:1400px;top:504px">X</span><span class="t ll" style="right:382px;top:504px">26.9 m</span>
<span class="t ll" style="left:1400px;top:529px">Y</span><span class="t ll" style="right:382px;top:529px">38.5 m</span>
<span class="t ll" style="left:1400px;top:554px">Z</span><span class="t ll" style="right:382px;top:554px">0 m</span>

<span class="vt" style="left:1561px;top:114px;color:#e8e8e8">Item</span><span class="vt" style="left:1561px;top:168px">Tool</span><span class="vt" style="left:1561px;top:219px">View</span><span class="vt" style="left:1561px;top:273px">BlenderKit</span>

<span class="ot" style="left:1687px;top:69px;width:141px;letter-spacing:-.35px">Creators desk with 3 monitors</span>
<span class="ot" style="left:1712px;top:94px;width:116px">Monitor_MSI_Optix</span>
<span class="ot" style="left:1712px;top:119px;width:116px">Monitor_MSI_Optix</span>
<span class="ot" style="left:1712px;top:144px;width:116px">Monitor_MSI_Optix</span>
<span class="ot" style="left:1662px;top:169px">divane</span>
<span class="ot" style="left:1687px;top:194px">Cube</span>
<span class="ot" style="left:1687px;top:219px">Cube.001</span>
<span class="ot" style="left:1687px;top:244px">Cylinder</span>
<span class="ot" style="left:1687px;top:269px">Plane.002</span>
<span class="ot" style="left:1687px;top:294px;height:14px">Plane.003</span>

<span class="t mt" style="left:1663px;top:358px">Plane</span>
<span class="t mt" style="left:1640px;top:403px">Add Modifier</span>

<span class="t st" style="left:39px;top:999px">Выделить</span><span class="t st" style="left:320px;top:999px">Повернуть вид</span><span class="t st" style="left:601px;top:999px">Object Context Menu</span><span class="t st" style="left:1870px;top:999px">3.4.1</span>
</div></body></html>
